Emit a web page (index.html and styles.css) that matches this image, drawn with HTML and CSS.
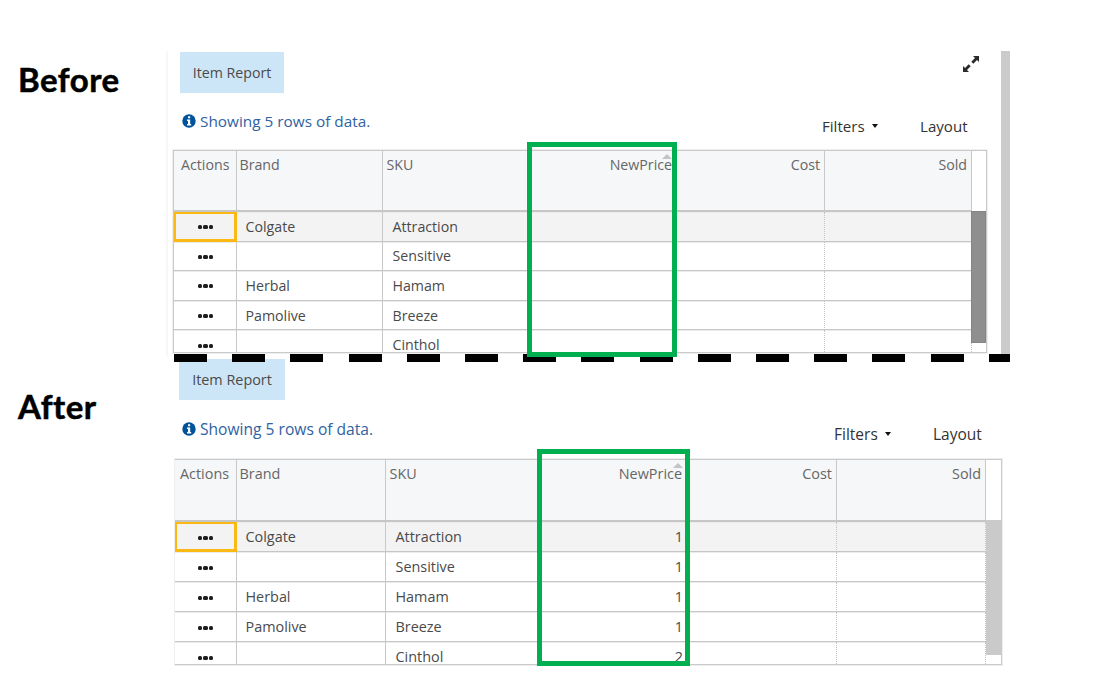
FILE: index.html
```html
<!DOCTYPE html>
<html lang="en">
<head>
<meta charset="utf-8">
<title>Item Report</title>
<link rel="stylesheet" href="styles.css">
</head>
<body>
<main class="page">
  <section class="state before">
    <h2 class="label">Before</h2>
    <div class="panel">
      <div class="top"><span class="tab">Item Report</span>
        <svg class="expand" width="18" height="18" viewBox="0 0 18 18"><path d="M11 1h6v6l-2-2-3.700 3.700-2-2L13 3zM7 17H1v-6l2 2 3.700-3.700 2 2L5 15z" fill="#2b2b2b"/></svg>
      </div>
      <div class="tools">
        <div class="info"><svg class="dot" viewBox="0 0 14 14"><circle cx="7" cy="7" r="6.7" fill="#00529b"/><path d="M6 2.300h2.200v2H6zM5 5.400h3.200v4.500h1v1.500H5V9.900h1v-3H5z" fill="#fff"/></svg><span class="msg">Showing 5 rows of data.</span></div>
        <span class="filters">Filters</span><i class="caret"></i><span class="layout">Layout</span>
      </div>
      <div class="table">
        <div class="row head"><div>Actions</div><div>Brand</div><div>SKU</div><div class="num">NewPrice<i class="sort"></i></div><div class="num">Cost</div><div class="num">Sold</div></div>
        <div class="row sel"><div><b class="more"><i></i><i></i><i></i></b></div><div>Colgate</div><div>Attraction</div><div></div><div></div><div></div></div>
        <div class="row"><div><b class="more"><i></i><i></i><i></i></b></div><div></div><div>Sensitive</div><div></div><div></div><div></div></div>
        <div class="row"><div><b class="more"><i></i><i></i><i></i></b></div><div>Herbal</div><div>Hamam</div><div></div><div></div><div></div></div>
        <div class="row"><div><b class="more"><i></i><i></i><i></i></b></div><div>Pamolive</div><div>Breeze</div><div></div><div></div><div></div></div>
        <div class="row"><div><b class="more"><i></i><i></i><i></i></b></div><div></div><div>Cinthol</div><div></div><div></div><div></div></div>
        <div class="scroll"></div>
      </div>
      <div class="mark"></div>
    </div>
    <div class="pagebar"></div>
  </section>
  <div class="divider"></div>
  <section class="state after">
    <h2 class="label">After</h2>
    <div class="panel">
      <div class="top"><span class="tab">Item Report</span></div>
      <div class="tools">
        <div class="info"><svg class="dot" viewBox="0 0 14 14"><circle cx="7" cy="7" r="6.7" fill="#00529b"/><path d="M6 2.300h2.200v2H6zM5 5.400h3.200v4.500h1v1.500H5V9.900h1v-3H5z" fill="#fff"/></svg><span class="msg">Showing 5 rows of data.</span></div>
        <span class="filters">Filters</span><i class="caret"></i><span class="layout">Layout</span>
      </div>
      <div class="table">
        <div class="row head"><div>Actions</div><div>Brand</div><div>SKU</div><div class="num">NewPrice<i class="sort"></i></div><div class="num">Cost</div><div class="num">Sold</div></div>
        <div class="row sel"><div><b class="more"><i></i><i></i><i></i></b></div><div>Colgate</div><div>Attraction</div><div class="num">1</div><div></div><div></div></div>
        <div class="row"><div><b class="more"><i></i><i></i><i></i></b></div><div></div><div>Sensitive</div><div class="num">1</div><div></div><div></div></div>
        <div class="row"><div><b class="more"><i></i><i></i><i></i></b></div><div>Herbal</div><div>Hamam</div><div class="num">1</div><div></div><div></div></div>
        <div class="row"><div><b class="more"><i></i><i></i><i></i></b></div><div>Pamolive</div><div>Breeze</div><div class="num">1</div><div></div><div></div></div>
        <div class="row"><div><b class="more"><i></i><i></i><i></i></b></div><div></div><div>Cinthol</div><div class="num">2</div><div></div><div></div></div>
        <div class="scroll"></div>
      </div>
      <div class="mark"></div>
    </div>
  </section>
</main>
</body>
</html>
```

FILE: styles.css
```css
* { box-sizing: border-box; }
body { margin: 0; background: #fff; }
.page {
  position: relative;
  width: 1109px;
  height: 697px;
  padding-top: 51px;
  overflow: hidden;
  font-family: "Open Sans", "Noto Sans", sans-serif;
  color: #4a4a4a;
}
.state { display: flex; }
.before {
  height: 308px;
  --cols: 63px 146px 147px 147px 148px 147px;
  --row: 29.6px;
  --cell: 14.2px;
  --small: 14.2px;
  --msg: 15.35px;
  --tool: 15.1px;
}
.after {
  --cols: 62px 149px 152px 150px 149px 149px;
  --row: 30.1px;
  --cell: 14.4px;
  --small: 14.4px;
  --msg: 15.6px;
  --tool: 15.5px;
}
.label {
  margin: 0;
  width: 166px;
  padding-left: 18px;
  font: 700 33px/40px "Lato", sans-serif;
  letter-spacing: 0.5px;
  font-variant-ligatures: none;
  -webkit-text-stroke: 0.5px #000;
  color: #000;
}
.before .label { padding-top: 8px; }
.after .label { padding-top: 27px; width: 175px; }

/* report panel */
.panel { position: relative; }
.before .panel { width: 835px; height: 305px; padding-left: 5px; border-left: 2px solid #f7f7f7; }
.after .panel { width: 830px; }
.top { display: flex; justify-content: space-between; }
.before .top { padding: 1px 21px 0 7px; }
.after .top { padding: 0 0 0 4px; }
.tab {
  display: flex;
  align-items: center;
  justify-content: center;
  background: #cde6f7;
  font-size: var(--small);
}
.before .tab { width: 104px; height: 41px; }
.after .tab { width: 106px; height: 41px; }
.expand { margin-top: 3px; }
.tools { display: flex; color: #333; font-size: var(--tool); line-height: 20px; }
.before .tools { height: 57px; padding: 18px 0 0 9px; }
.after .tools { height: 59px; padding: 19px 0 0 7px; }
.info { display: flex; color: #2f62a3; font-size: var(--msg); }
.dot { width: 14px; height: 14px; margin: 3px 4px 0 0; }
.filters, .layout { margin-top: 4.500px; }
.caret {
  margin: 13px 0 0 8px;
  width: 0;
  height: 0;
  border: 3px solid transparent;
  border-top: 4px solid #111;
  border-bottom: 0;
}
.before .info { width: 640px; }
.after .info { width: 652px; }
.before .filters { width: 42px; }
.after .filters { width: 43px; }
.layout { margin-left: 42px; }

/* data grid */
.table {
  position: relative;
  overflow: hidden;
  border: 1px solid #cacaca;
  box-shadow: 0 0 0 1px #eee;
  font-size: var(--cell);
}
.before .table { width: 814px; height: 203px; }
.after .table { width: 827px; height: 206px; border-left: 0; }
.row { display: grid; grid-template-columns: var(--cols); width: max-content; height: var(--row); }
.row > div {
  position: relative;
  padding: 1px 3px 0 8.5px;
  display: flex;
  align-items: center;
  line-height: 20px;
  border-right: 1px solid #c8c8c8;
  border-bottom: 1px solid #c6c6c6;
  box-shadow: inset 0 1px #ececec;
}
.row > div:nth-child(3) { padding-left: 9.500px; }
.row > .num { justify-content: flex-end; padding-right: 4px; }
.row:not(.head) > div:nth-child(n+4) { border-right: 1px dotted #c4c4c4; }
.row.head { height: 61px; color: #666; }
.after .row.head { height: 62px; }
.row.head > div {
  align-items: flex-start;
  padding: 4px 4px 0 2.500px;
  background: #f5f7f9;
  border-bottom: 2px solid #c6c6c6;
  box-shadow: none;
}
.row.head > div:nth-child(3) { padding-left: 3.500px; }
.row.head > div:first-child { padding-left: 7px; }
.after .row.head > div:first-child { padding-left: 5px; }
.after .row.head > div:nth-child(4) { padding-right: 5px; }
.row.sel > div { background: #f3f3f3; }
.row.sel > div:first-child { box-shadow: inset 0 0 0 2px #fdb913; border-color: #fdb913; }
.more { display: flex; gap: 1px; margin: 1px 0 0 15px; }
.after .more { margin-left: 14px; }
.more i { width: 4.500px; height: 4px; border-radius: 1.500px; background: #1d1d1d; }
.sort {
  position: absolute;
  right: 4px;
  top: 3px;
  border: 5px solid transparent;
  border-bottom-color: #c4c4c4;
  border-top: 0;
}
.scroll { position: absolute; right: 0; top: 60px; width: 15px; }
.before .scroll { height: 132px; background: #8f8f8f; border: 1px solid #858585; }
.after .scroll { height: 135px; background: #cacaca; }
.pagebar { width: 9px; height: 303px; background: #cbcbcb; }

/* highlight outlines and dashed separator lie over both reports */
.mark { position: absolute; z-index: 3; border: 5.500px solid #00b050; }
.before .mark { left: 359px; top: 91px; width: 150px; height: 215px; }
.after .mark { left: 362px; top: 90px; width: 153px; height: 217px; }
.divider {
  position: absolute;
  z-index: 2;
  left: 174px;
  top: 354px;
  width: 836px;
  height: 8px;
  background: repeating-linear-gradient(90deg, #000 0 33px, transparent 33px 58.200px);
}
```
